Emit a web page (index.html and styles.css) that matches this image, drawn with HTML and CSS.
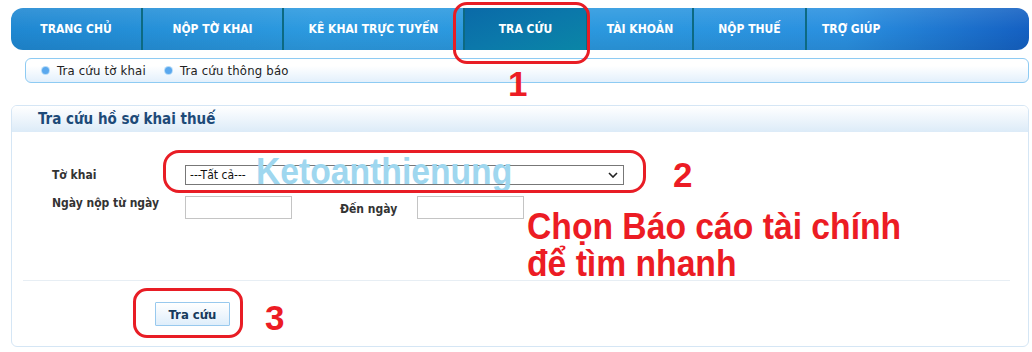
FILE: index.html
```html
<!DOCTYPE html>
<html lang="vi">
<head>
<meta charset="utf-8">
<title>Tra cứu hồ sơ khai thuế</title>
<link rel="stylesheet" href="styles.css">
</head>
<body>
<div class="page">
  <nav class="nav">
    <a class="nav-item w1">TRANG CHỦ</a>
    <a class="nav-item w2">NỘP TỜ KHAI</a>
    <a class="nav-item w3">KÊ KHAI TRỰC TUYẾN</a>
    <a class="nav-item w4 active">TRA CỨU</a>
    <a class="nav-item w5">TÀI KHOẢN</a>
    <a class="nav-item w6">NỘP THUẾ</a>
    <a class="nav-item last">TRỢ GIÚP</a>
  </nav>

  <div class="subnav">
    <span class="sub-item"><i class="dot"></i>Tra cứu tờ khai</span>
    <span class="sub-item"><i class="dot"></i>Tra cứu thông báo</span>
  </div>

  <section class="panel">
    <div class="panel-head">Tra cứu hồ sơ khai thuế</div>
    <div class="panel-body">
      <div class="form">
        <div class="row row1">
          <label class="lbl">Tờ khai</label>
          <div class="select"><span>---Tất cả---</span>
            <svg class="chev" width="10" height="6" viewBox="0 0 10 6"><path d="M1 1 L5 5 L9 1" fill="none" stroke="#222" stroke-width="1.6"/></svg>
          </div>
        </div>
        <div class="row row2">
          <label class="lbl">Ngày nộp từ ngày</label>
          <div class="input"></div>
          <label class="lbl to">Đến ngày</label>
          <div class="input"></div>
        </div>
      </div>
      <div class="divider"></div>
      <div class="actions"><button class="btn">Tra cứu</button></div>
    </div>
  </section>

  <div class="watermark">Ketoanthienung</div>
  <div class="ring ring1"></div>
  <div class="ring ring2"></div>
  <div class="ring ring3"></div>
  <div class="num num1">1</div>
  <div class="num num2">2</div>
  <div class="num num3">3</div>
  <div class="note">Chọn Báo cáo tài chính<br>để tìm nhanh</div>
</div>
</body>
</html>
```

FILE: styles.css
```css
html, body {
  margin: 0;
  padding: 0;
  background: #ffffff;
}

body {
  font-family: "DejaVu Sans Condensed", "DejaVu Sans", "Noto Sans", sans-serif;
  font-stretch: condensed;
}

.page {
  position: relative;
  width: 1032px;
  height: 352px;
  padding-top: 8px;
  box-sizing: border-box;
  overflow: hidden;
}

/* ---------- main navigation ---------- */
.nav {
  display: flex;
  height: 42px;
  margin: 0 3px 0 11px;
  border-radius: 12px;
  overflow: hidden;
  background:
    linear-gradient(180deg, rgba(255,255,255,0.10) 0%, rgba(255,255,255,0) 50%, rgba(0,0,0,0.07) 100%),
    linear-gradient(90deg, #1f88d2 0%, #2c9ae0 30%, #2b98df 60%, #2a90e0 82%, #1460c2 100%);
}

.nav-item {
  display: flex;
  align-items: center;
  justify-content: center;
  box-sizing: border-box;
  border-right: 2px solid #0d6a82;
  color: #ffffff;
  font-weight: bold;
  font-size: 12px;
  white-space: nowrap;
  cursor: pointer;
}

.w1 { flex: 0 0 132px; }
.w2 { flex: 0 0 141px; }
.w3 { flex: 0 0 181px; }
.w4 { flex: 0 0 123px; }
.w5 { flex: 0 0 106px; }
.w6 { flex: 0 0 113px; }

.nav-item.active {
  background: linear-gradient(160deg, #0a6aa8 0%, #0b78aa 50%, #0a86a6 100%);
}

.nav-item.last {
  flex: 1 1 auto;
  justify-content: flex-start;
  padding-left: 15px;
  border-right: none;
}

/* ---------- sub navigation ---------- */
.subnav {
  display: flex;
  align-items: center;
  height: 25px;
  box-sizing: border-box;
  margin: 8px 3px 0 25px;
  padding-left: 16px;
  border: 1px solid #8ecbf3;
  border-radius: 6px;
  background: linear-gradient(180deg, #ffffff 30%, #e3f0fc 100%);
  font-size: 13px;
  letter-spacing: 0.2px;
  color: #222222;
}

.sub-item {
  display: flex;
  align-items: center;
  margin-right: 19px;
}

.dot {
  display: block;
  width: 7px;
  height: 7px;
  border-radius: 50%;
  background: #5aa8ee;
  box-shadow: 0 0 0 1px #b5dbf8;
  margin-right: 8px;
}

/* ---------- panel ---------- */
.panel {
  margin: 22px 3px 0 11px;
  height: 242px;
  box-sizing: border-box;
  border: 1px solid #d5e6f5;
  border-radius: 6px;
  overflow: hidden;
}

.panel-head {
  height: 26px;
  display: flex;
  align-items: center;
  padding-left: 26px;
  background: linear-gradient(180deg, #ffffff 0%, #dcebf8 100%);
  font-size: 15px;
  font-weight: bold;
  color: #1d4a78;
}

.panel-body {
  padding-top: 33px;
}

.form {
  padding-left: 40px;
}

.row {
  display: flex;
}

.row1 {
  align-items: center;
  height: 20px;
}

.row2 {
  align-items: flex-start;
  height: 23px;
  margin-top: 11px;
}

.lbl {
  flex: 0 0 133px;
  font-size: 12px;
  font-weight: bold;
  color: #333333;
}

.lbl.to {
  flex: 0 0 77px;
  margin-left: 48px;
  padding-top: 6px;
}

.select {
  width: 439px;
  height: 20px;
  box-sizing: border-box;
  border: 1px solid #777777;
  background: #ffffff;
  display: flex;
  align-items: center;
  justify-content: space-between;
  padding: 0 5px 0 4px;
  font-size: 12px;
  color: #111111;
}

.chev {
  display: block;
}

.input {
  width: 107px;
  height: 23px;
  box-sizing: border-box;
  border: 1px solid #c4c4c4;
  background: #ffffff;
}

.divider {
  height: 1px;
  margin: 61px 18px 0 11px;
  background: #e7eef4;
}

.actions {
  padding: 21px 0 0 143px;
}

.btn {
  width: 75px;
  height: 24px;
  padding: 0;
  border: 1px solid #98c9ee;
  border-radius: 1px;
  background: linear-gradient(180deg, #ffffff 0%, #dfeefb 100%);
  font-family: "DejaVu Sans Condensed", "DejaVu Sans", sans-serif;
  font-stretch: condensed;
  font-size: 13px;
  font-weight: bold;
  color: #173a5c;
}

/* ---------- annotations drawn over the screenshot ---------- */
.watermark {
  position: absolute;
  left: 256px;
  top: 153px;
  font-family: "Liberation Sans", Arial, sans-serif;
  font-size: 37px;
  line-height: 37px;
  font-weight: bold;
  color: #9fd7ef;
  transform: scaleX(0.91);
  transform-origin: left top;
  white-space: nowrap;
}

.ring {
  position: absolute;
  box-sizing: border-box;
  border: 3px solid #e81d25;
}

.ring1 { left: 453px; top: 2px; width: 137px; height: 62px; border-radius: 14px; }
.ring2 { left: 163px; top: 150px; width: 483px; height: 43px; border-radius: 16px; }
.ring3 { left: 133px; top: 288px; width: 110px; height: 50px; border-radius: 14px; }

.num {
  position: absolute;
  font-family: "Liberation Sans", Arial, sans-serif;
  font-size: 35px;
  line-height: 35px;
  font-weight: bold;
  color: #ec1c24;
}

.num1 { left: 508px; top: 66px; }
.num2 { left: 673px; top: 157px; }
.num3 { left: 265px; top: 300px; }

.note {
  position: absolute;
  left: 527px;
  top: 208px;
  font-family: "Liberation Sans", Arial, sans-serif;
  font-size: 37px;
  line-height: 37px;
  font-weight: bold;
  color: #ec1c24;
  transform: scaleX(0.91);
  transform-origin: left top;
  white-space: nowrap;
}
```
